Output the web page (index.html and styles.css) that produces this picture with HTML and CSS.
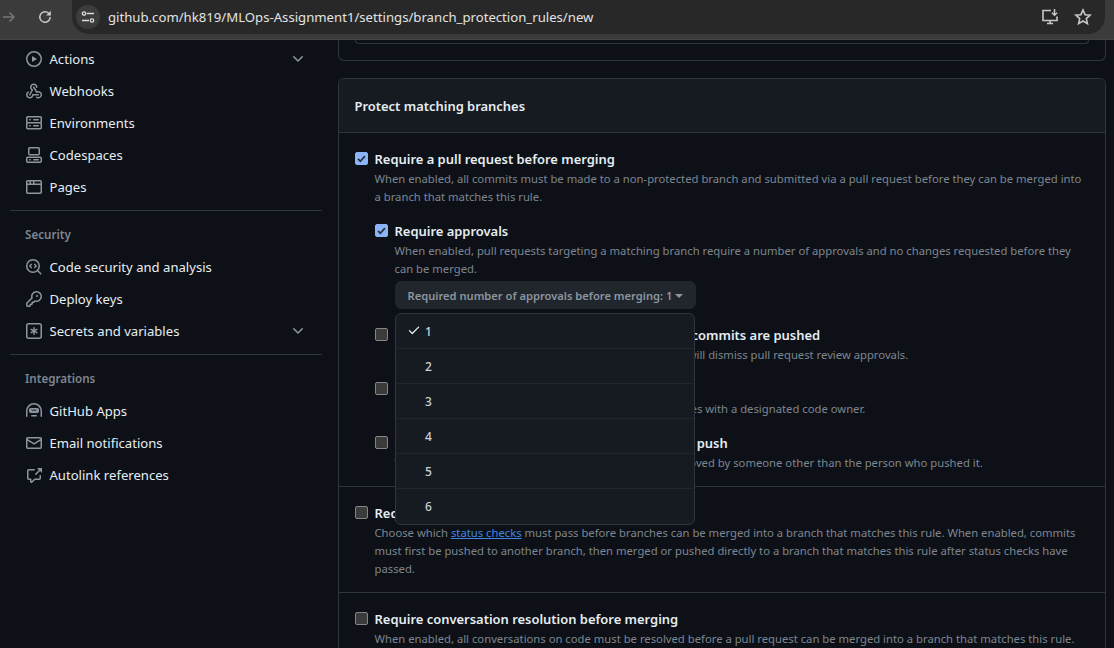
FILE: index.html
```html
<!DOCTYPE html>
<html lang="en">
<head>
  <meta charset="UTF-8">
  <title>Branch protection rule</title>
  <link rel="stylesheet" href="styles.css">
</head>
<body>
  <header class="toolbar">
    <svg class="nav-arrow" width="16" height="16" viewBox="0 0 16 16"><path d="M2 8h11M8.500 3.500 13 8l-4.500 4.500" fill="none" stroke="#757575" stroke-width="1.500"/></svg>
    <svg class="nav-reload" width="16" height="16" viewBox="0 0 16 16"><path d="M13.200 8a5.200 5.200 0 1 1-1.500-3.700L13.500 6" fill="none" stroke="#c7c7c7" stroke-width="1.500"/><path d="M13.800 1.800v4.700H9.100z" fill="#c7c7c7"/></svg>
    <div class="omnibox">
      <span class="site-info">
        <svg width="14" height="14" viewBox="0 0 14 14"><path d="M6 3.500h7M1 10.500h7" fill="none" stroke="#dcdcdc" stroke-width="1.400"/><circle cx="3" cy="3.500" r="1.700" fill="none" stroke="#dcdcdc" stroke-width="1.300"/><circle cx="11" cy="10.500" r="1.700" fill="none" stroke="#dcdcdc" stroke-width="1.300"/></svg>
      </span>
      <span class="url">github.com/hk819/MLOps-Assignment1/settings/branch_protection_rules/new</span>
      <svg class="omni-icon" width="20" height="20" viewBox="0 0 20 20"><path d="M11 3.500H3v10h14v-4M7 16.500h6M10 13.500v3" fill="none" stroke="#c7c7c7" stroke-width="1.600"/><path d="M14.500 2v6M12 5.800l2.500 2.500L17 5.800" fill="none" stroke="#c7c7c7" stroke-width="1.500"/></svg>
      <svg class="omni-icon" width="18" height="18" viewBox="0 0 18 18"><path d="m9 2 2.100 4.700 5 .5-3.800 3.400 1.100 5L9 13l-4.400 2.600 1.100-5L1.900 7.200l5-.5z" fill="none" stroke="#c7c7c7" stroke-width="1.600"/></svg>
    </div>
  </header>

  <div class="layout">
    <nav class="sidebar">
      <a class="nav-item"><svg class="icon" viewBox="0 0 16 16"><path d="M8 0a8 8 0 1 1 0 16A8 8 0 0 1 8 0ZM1.500 8a6.500 6.500 0 1 0 13 0 6.500 6.500 0 0 0-13 0Zm4.879-2.773 4.264 2.559a.25.25 0 0 1 0 .428l-4.264 2.559A.25.25 0 0 1 6 10.559V5.442a.25.25 0 0 1 .379-.215Z"/></svg>Actions<svg class="chevron" viewBox="0 0 16 16"><path d="M12.780 5.220a.749.749 0 0 1 0 1.060l-4.250 4.250a.749.749 0 0 1-1.060 0L3.220 6.280a.749.749 0 1 1 1.060-1.060L8 8.939l3.720-3.719a.749.749 0 0 1 1.060 0Z"/></svg></a>
      <a class="nav-item"><svg class="icon" viewBox="0 0 16 16"><path d="M5.500 4.250a2.250 2.250 0 0 1 4.500 0 .75.75 0 0 0 1.500 0 3.750 3.750 0 1 0-6.140 2.889l-2.272 4.258a.75.75 0 0 0 1.324.706L7 7.250a.75.75 0 0 0-.309-1.015A2.250 2.250 0 0 1 5.500 4.250Z"/><path d="M7.364 3.607a.75.75 0 0 1 1.030.257l2.608 4.349a3.750 3.750 0 1 1-.628 6.785.75.75 0 0 1 .752-1.299 2.250 2.250 0 1 0-.033-3.880.75.75 0 0 1-1.030-.256L7.107 4.636a.75.75 0 0 1 .257-1.030Z"/><path d="M2.900 8.776A.75.75 0 0 1 2.625 9.800 2.250 2.250 0 1 0 6 11.750a.75.75 0 0 1 .75-.751h5.500a.75.75 0 0 1 0 1.500H7.425a3.751 3.751 0 1 1-5.550-3.998.75.75 0 0 1 1.024.274Z"/></svg>Webhooks</a>
      <a class="nav-item"><svg class="icon" viewBox="0 0 16 16"><path d="M1.750 1h12.500c.966 0 1.750.784 1.750 1.750v4c0 .372-.116.717-.314 1 .198.283.314.628.314 1v4a1.750 1.750 0 0 1-1.750 1.750H1.750A1.750 1.750 0 0 1 0 12.750v-4c0-.372.116-.717.314-1a1.739 1.739 0 0 1-.314-1v-4C0 1.784.784 1 1.750 1ZM1.500 2.750v4c0 .138.112.25.25.25h12.500a.25.25 0 0 0 .25-.25v-4a.25.25 0 0 0-.25-.25H1.750a.25.25 0 0 0-.25.25Zm.25 5.750a.25.25 0 0 0-.25.25v4c0 .138.112.25.25.25h12.500a.25.25 0 0 0 .25-.25v-4a.25.25 0 0 0-.25-.25ZM7 4.750A.75.75 0 0 1 7.750 4h4.500a.75.75 0 0 1 0 1.500h-4.500A.75.75 0 0 1 7 4.750ZM7.750 10h4.500a.75.75 0 0 1 0 1.500h-4.500a.75.75 0 0 1 0-1.500ZM3 4.750A.75.75 0 0 1 3.750 4h.5a.75.75 0 0 1 0 1.500h-.5A.75.75 0 0 1 3 4.750ZM3.750 10h.5a.75.75 0 0 1 0 1.500h-.5a.75.75 0 0 1 0-1.500Z"/></svg>Environments</a>
      <a class="nav-item"><svg class="icon" viewBox="0 0 16 16"><path d="M0 11.250c0-.966.784-1.750 1.750-1.750h12.500c.966 0 1.750.784 1.750 1.750v3A1.750 1.750 0 0 1 14.250 16H1.750A1.750 1.750 0 0 1 0 14.250Zm2-9.500C2 .784 2.784 0 3.750 0h8.500C13.216 0 14 .784 14 1.750v5a1.750 1.750 0 0 1-1.750 1.750h-8.500A1.750 1.750 0 0 1 2 6.750Zm1.750-.25a.25.25 0 0 0-.25.25v5c0 .138.112.25.25.25h8.500a.25.25 0 0 0 .25-.25v-5a.25.25 0 0 0-.25-.25Zm-2 9.500a.25.25 0 0 0-.25.25v3c0 .138.112.25.25.25h12.500a.25.25 0 0 0 .25-.25v-3a.25.25 0 0 0-.25-.25Z"/><path d="M7 12.750a.75.75 0 0 1 .75-.75h4.500a.75.75 0 0 1 0 1.500h-4.500a.75.75 0 0 1-.75-.75Zm-4 0a.75.75 0 0 1 .75-.75h.5a.75.75 0 0 1 0 1.500h-.5a.75.75 0 0 1-.75-.75Z"/></svg>Codespaces</a>
      <a class="nav-item"><svg class="icon" viewBox="0 0 16 16"><path d="M0 2.750C0 1.784.784 1 1.750 1h12.500c.966 0 1.750.784 1.750 1.750v10.500A1.750 1.750 0 0 1 14.250 15H1.750A1.750 1.750 0 0 1 0 13.250ZM14.500 6h-13v7.250c0 .138.112.25.25.25h12.500a.25.25 0 0 0 .25-.25Zm-6-3.500v2h6V2.750a.25.25 0 0 0-.25-.25ZM5 2.500v2h2v-2Zm-3.250 0a.25.25 0 0 0-.25.25V4.500h2v-2Z"/></svg>Pages</a>

      <hr class="nav-rule">
      <h2 class="nav-heading">Security</h2>
      <a class="nav-item"><svg class="icon" viewBox="0 0 16 16"><circle cx="7" cy="7" r="6.250" fill="none" stroke="currentColor" stroke-width="1.500"/><path d="m11.600 11.600 3.600 3.600M5.700 5 3.800 7l1.900 2M8.300 5l1.900 2-1.900 2" fill="none" stroke="currentColor" stroke-width="1.400"/></svg>Code security and analysis</a>
      <a class="nav-item"><svg class="icon" viewBox="0 0 16 16"><path d="M10.500 0a5.499 5.499 0 1 1-1.288 10.848l-.932.932a.749.749 0 0 1-.53.22H7v.75a.749.749 0 0 1-.22.53l-.5.5a.749.749 0 0 1-.53.22H5v.75a.749.749 0 0 1-.22.53l-.5.5a.749.749 0 0 1-.53.22h-2A1.750 1.750 0 0 1 0 14.250v-2c0-.199.079-.389.22-.53l4.932-4.932A5.500 5.500 0 0 1 10.500 0Zm-4 5.500c-.001.431.069.86.205 1.269a.75.75 0 0 1-.181.768L1.500 12.560v1.690c0 .138.112.25.25.25h1.690l.06-.06v-1.190a.75.75 0 0 1 .75-.75h1.190l.06-.06v-1.190a.75.75 0 0 1 .75-.75h1.190l1.023-1.025a.75.75 0 0 1 .768-.18A4 4 0 1 0 6.500 5.500ZM11 6a1 1 0 1 1 0-2 1 1 0 0 1 0 2Z"/></svg>Deploy keys</a>
      <a class="nav-item"><svg class="icon" viewBox="0 0 16 16"><path d="M0 2.750A2.750 2.750 0 0 1 2.750 0h10.500A2.750 2.750 0 0 1 16 2.750v10.500A2.750 2.750 0 0 1 13.250 16H2.750A2.750 2.750 0 0 1 0 13.250ZM2.750 1.500c-.69 0-1.250.56-1.250 1.250v10.500c0 .69.56 1.250 1.250 1.250h10.500c.69 0 1.250-.56 1.250-1.250V2.750c0-.69-.56-1.250-1.250-1.250Z"/><path d="M8 4a.75.75 0 0 1 .75.75V6.700l1.690-.975a.75.75 0 0 1 .75 1.300L9.500 8l1.690.976a.75.75 0 0 1-.75 1.298L8.750 9.300v1.950a.75.75 0 0 1-1.500 0V9.300l-1.690.975a.75.75 0 0 1-.75-1.299L6.500 8l-1.690-.975a.75.75 0 0 1 .75-1.300l1.690.976V4.750A.75.75 0 0 1 8 4Z"/></svg>Secrets and variables<svg class="chevron" viewBox="0 0 16 16"><path d="M12.780 5.220a.749.749 0 0 1 0 1.060l-4.250 4.250a.749.749 0 0 1-1.060 0L3.220 6.280a.749.749 0 1 1 1.060-1.060L8 8.939l3.720-3.719a.749.749 0 0 1 1.060 0Z"/></svg></a>

      <hr class="nav-rule">
      <h2 class="nav-heading">Integrations</h2>
      <a class="nav-item"><svg class="icon" viewBox="0 0 16 16"><path d="M0 8a8 8 0 0 1 16 0v5.250a.75.75 0 0 1-1.500 0V8a6.500 6.500 0 1 0-13 0v5.250a.75.75 0 0 1-1.500 0Zm3-1.250C3 5.784 3.784 5 4.750 5h6.500c.966 0 1.750.784 1.750 1.750v1.500A1.750 1.750 0 0 1 11.250 10h-6.500A1.750 1.750 0 0 1 3 8.250ZM5 12.750a.75.75 0 0 1 .75-.75h4.500a.75.75 0 0 1 0 1.500h-4.500a.75.75 0 0 1-.75-.75Z"/><path d="m5.500 6.700 1.200 1 1.300-1 1.300 1 1.200-1" fill="none" stroke="#0d1117" stroke-width="1"/></svg>GitHub Apps</a>
      <a class="nav-item"><svg class="icon" viewBox="0 0 16 16"><path d="M1.750 2h12.500c.966 0 1.750.784 1.750 1.750v8.500A1.750 1.750 0 0 1 14.250 14H1.750A1.750 1.750 0 0 1 0 12.250v-8.500C0 2.784.784 2 1.750 2ZM1.500 12.251c0 .138.112.25.25.25h12.500a.25.25 0 0 0 .25-.25V5.809L8.380 9.397a.75.75 0 0 1-.76 0L1.500 5.809v6.442Zm13-8.181v-.32a.25.25 0 0 0-.25-.25H1.750a.25.25 0 0 0-.25.25v.32L8 7.880Z"/></svg>Email notifications</a>
      <a class="nav-item"><svg class="icon" viewBox="0 0 16 16"><path d="M2.750 3.500a.25.25 0 0 0-.25.25v7.500c0 .138.112.25.25.25h2a.75.75 0 0 1 .75.75v2.190l2.720-2.720a.749.749 0 0 1 .53-.22h4.500a.25.25 0 0 0 .25-.25v-2.500a.75.75 0 0 1 1.500 0v2.500A1.750 1.750 0 0 1 13.250 13H9.060l-2.573 2.573A1.458 1.458 0 0 1 4 14.543V13H2.750A1.750 1.750 0 0 1 1 11.250v-7.500C1 2.784 1.784 2 2.750 2h5.500a.75.75 0 0 1 0 1.500ZM16 1.250v4.146a.25.25 0 0 1-.427.177L14.030 4.030l-3.750 3.750a.749.749 0 0 1-1.275-.326.749.749 0 0 1 .215-.734l3.750-3.750-1.543-1.543A.25.25 0 0 1 11.604 1h4.146a.25.25 0 0 1 .25.25Z"/></svg>Autolink references</a>
    </nav>

    <main class="content">
      <div class="box box-cut">
        <div class="box-inner"></div>
      </div>

      <section class="box">
        <h3 class="box-header">Protect matching branches</h3>

        <div class="box-row">
          <div class="rule">
            <span class="check on"><svg viewBox="0 0 16 16"><path d="M3 8.500 6.300 12 13 4.500" fill="none" stroke="#2b2f36" stroke-width="2.600"/></svg></span>
            <div class="rule-body">
              <div class="rule-title">Require a pull request before merging</div>
              <p class="rule-note">When enabled, all commits must be made to a non-protected branch and submitted via a pull request before they can be merged into a branch that matches this rule.</p>

              <div class="rule nested">
                <span class="check on"><svg viewBox="0 0 16 16"><path d="M3 8.500 6.300 12 13 4.500" fill="none" stroke="#2b2f36" stroke-width="2.600"/></svg></span>
                <div class="rule-body">
                  <div class="rule-title">Require approvals</div>
                  <p class="rule-note">When enabled, pull requests targeting a matching branch require a number of approvals and no changes requested before they can be merged.</p>
                  <div class="picker">
                    <button class="picker-btn">Required number of approvals before merging: 1<span class="caret"></span></button>
                    <ul class="picker-menu">
                      <li><svg class="tick" viewBox="0 0 16 16"><path d="M13.780 4.220a.75.75 0 0 1 0 1.060l-7.250 7.250a.75.75 0 0 1-1.060 0L2.220 9.280a.751.751 0 0 1 .018-1.042.751.751 0 0 1 1.042-.018L6 10.940l6.720-6.720a.75.75 0 0 1 1.060 0Z"/></svg>1</li>
                      <li>2</li>
                      <li>3</li>
                      <li>4</li>
                      <li>5</li>
                      <li>6</li>
                    </ul>
                  </div>
                </div>
              </div>

              <div class="rule nested">
                <span class="check"></span>
                <div class="rule-body">
                  <div class="rule-title">Dismiss stale pull request approvals when new commits are pushed</div>
                  <p class="rule-note">New reviewable commits pushed to a matching branch will dismiss pull request review approvals.</p>
                </div>
              </div>

              <div class="rule nested">
                <span class="check"></span>
                <div class="rule-body">
                  <div class="rule-title">Require review from Code Owners</div>
                  <p class="rule-note">Require an approved review in pull requests including files with a designated code owner.</p>
                </div>
              </div>

              <div class="rule nested">
                <span class="check"></span>
                <div class="rule-body">
                  <div class="rule-title">Require approval of the most recent reviewable push</div>
                  <p class="rule-note">Whether the most recent reviewable push must be approved by someone other than the person who pushed it.</p>
                </div>
              </div>
            </div>
          </div>
        </div>

        <div class="box-row">
          <div class="rule">
            <span class="check"></span>
            <div class="rule-body">
              <div class="rule-title">Require status checks to pass before merging</div>
              <p class="rule-note">Choose which <a class="link">status checks</a> must pass before branches can be merged into a branch that matches this rule. When enabled, commits must first be pushed to another branch, then merged or pushed directly to a branch that matches this rule after status checks have passed.</p>
            </div>
          </div>
        </div>

        <div class="box-row">
          <div class="rule">
            <span class="check"></span>
            <div class="rule-body">
              <div class="rule-title">Require conversation resolution before merging</div>
              <p class="rule-note">When enabled, all conversations on code must be resolved before a pull request can be merged into a branch that matches this rule.</p>
            </div>
          </div>
        </div>
      </section>
    </main>
  </div>
</body>
</html>
```
FILE: styles.css
```css
* {
  box-sizing: border-box;
}
body {
  margin: 0;
  height: 648px;
  overflow: hidden;
  background: #0d1117;
  color: #e6edf3;
  font-family: "Noto Sans", "Open Sans", sans-serif;
  font-size: 13.1px;
}

/* browser chrome */
.toolbar {
  height: 40px;
  display: flex;
  align-items: flex-start;
  background: #3b3b3b;
  border-bottom: 1px solid #454545;
}
.nav-arrow {
  margin: 9px 0 0 1px;
}
.nav-reload {
  margin: 9px 0 0 20px;
}
.omnibox {
  margin-left: 19px;
  width: 1033px;
  height: 34px;
  display: flex;
  align-items: center;
  background: #282828;
  border-radius: 0 0 17px 17px;
  padding: 0 13px 0 4px;
}
.site-info {
  width: 24px;
  height: 24px;
  border-radius: 50%;
  background: #3c3c3c;
  display: flex;
  align-items: center;
  justify-content: center;
}
.url {
  margin-left: 8px;
  flex: 1;
  font-size: 13.17px;
  color: #e3e3e3;
}
.omni-icon {
  margin-left: 14px;
}

.layout {
  display: flex;
  height: 608px;
  overflow: hidden;
}

/* settings sidebar */
.sidebar {
  width: 338px;
  flex: none;
  padding: 3px 16px 0 10px;
}
.nav-item {
  height: 32px;
  display: flex;
  align-items: center;
  padding-left: 16px;
  color: #e6edf3;
}
.icon {
  width: 16px;
  height: 16px;
  margin-right: 7.5px;
  fill: #8d96a0;
  color: #8d96a0;
  flex: none;
}
.chevron {
  width: 16px;
  height: 16px;
  margin-left: auto;
  margin-right: 16px;
  fill: #8d96a0;
}
.nav-rule {
  border: 0;
  border-top: 1px solid #30363d;
  margin: 7px 0 0;
}
.nav-heading {
  margin: 0;
  padding-left: 15px;
  height: 40px;
  line-height: 48px;
  font-size: 11.6px;
  font-weight: 600;
  color: #7d8590;
}

/* main column */
.content {
  width: 768px;
  flex: none;
}
.box {
  border: 1px solid #30363d;
  border-radius: 6px;
  margin-bottom: 16px;
}
.box-cut {
  height: 21px;
  border-top: 0;
  border-radius: 0 0 6px 6px;
  margin-bottom: 17px;
  padding: 0 16px;
}
.box-inner {
  height: 4px;
  border: 1px solid #30363d;
  border-top: 0;
  border-radius: 0 0 6px 6px;
}
.box-header {
  margin: 0;
  height: 54px;
  line-height: 54px;
  padding-left: 15.5px;
  font-size: 12.95px;
  font-weight: 600;
  background: #161b22;
  border-bottom: 1px solid #30363d;
  border-radius: 6px 6px 0 0;
}
.box-row {
  padding: 16px 16px 14px;
  border-bottom: 1px solid #30363d;
}
.box-row:last-child {
  border-bottom: 0;
}
.rule {
  display: flex;
  gap: 7px;
}
.rule.nested {
  margin-top: 15px;
}
.rule-body {
  flex: 1;
  min-width: 0;
}
.rule-title {
  margin-left: -0.5px;
  line-height: 20px;
  font-size: 12.95px;
  font-weight: 600;
  margin-bottom: 1px;
}
.rule-note {
  margin: 0 0 0 -0.5px;
  font-size: 11.27px;
  line-height: 18px;
  color: #7d8590;
}
.link {
  color: #4184e4;
  text-decoration: underline;
}
.check {
  width: 13px;
  height: 13px;
  margin-top: 3px;
  flex: none;
  border-radius: 2px;
  background: #3b3b3b;
  border: 1px solid #858585;
  display: flex;
}
.check.on {
  background: #8ab4f8;
  border-color: #8ab4f8;
}
.check svg {
  width: 11px;
  height: 11px;
}

/* approvals select */
.picker {
  position: relative;
  margin-top: 3px;
  margin-bottom: 1px;
}
.picker-btn {
  display: block;
  width: 301px;
  height: 28px;
  padding: 0 11.5px;
  border: 1px solid #21262d;
  border-radius: 6px;
  background: #21262d;
  color: #8d96a0;
  font-family: inherit;
  font-size: 11.15px;
  font-weight: 600;
  text-align: left;
  white-space: nowrap;
}
.caret {
  display: inline-block;
  margin-left: 3px;
  border: 4px solid transparent;
  border-top-color: #8d96a0;
  border-bottom: 0;
  vertical-align: middle;
}
.picker-menu {
  position: absolute;
  top: 32px;
  left: 0;
  z-index: 10;
  width: 300px;
  margin: 0;
  padding: 0;
  list-style: none;
  background: #161b22;
  border: 1px solid #30363d;
  border-radius: 6px;
  overflow: hidden;
}
.picker-menu li {
  position: relative;
  height: 35px;
  line-height: 36px;
  padding-left: 29px;
  font-size: 12px;
  font-weight: 500;
  color: #c9d1d9;
  border-bottom: 1px solid #21262d;
}
.picker-menu li:last-child {
  border-bottom: 0;
}
.tick {
  position: absolute;
  left: 11px;
  top: 9px;
  width: 14px;
  height: 14px;
  fill: #e6edf3;
}
```
